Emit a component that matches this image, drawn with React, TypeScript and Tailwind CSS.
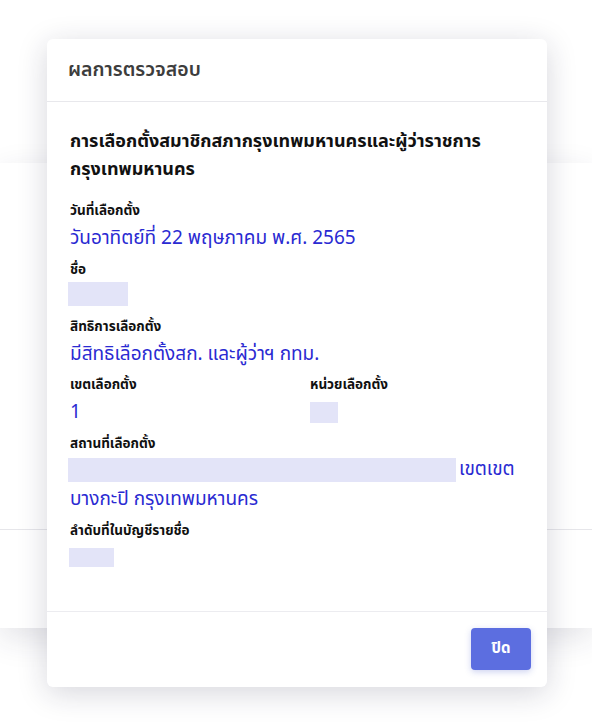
import React from 'react';

const Redacted = ({ className }: { className: string }) => (
  <span className={`inline-block bg-[#e3e4f8] align-middle ${className}`} />
);

const Label = ({ children }: { children: React.ReactNode }) => (
  <div className="pt-[2px] text-[13.5px] font-bold leading-[20px] text-[#111]">{children}</div>
);

const Value = ({ children }: { children: React.ReactNode }) => (
  <div className="pt-[3px] text-[19px] leading-[29px] text-[#2a2ad2]">{children}</div>
);

export default function App() {
  return (
    <div
      className="relative h-[725px] w-[592px] overflow-hidden bg-white"
      style={{ fontFamily: 'Tahoma, "Noto Sans Thai", "Noto Sans", sans-serif' }}
    >
      {/* page behind the dialog */}
      <div className="pt-[163px]">
        <div className="h-[465px] bg-white shadow-[0_10px_30px_rgba(40,40,70,0.13)]">
          <div className="h-[367px] border-b border-[#e6e6ea]" />
        </div>
      </div>

      {/* dialog */}
      <div className="absolute left-[47px] top-[39px] flex h-[648px] w-[500px] flex-col rounded-md bg-white shadow-[0_6px_30px_rgba(30,30,60,0.18)]">
        <div className="flex h-[63px] items-center border-b border-[#e8e8ec] px-[21px]">
          <h1 className="pt-[2px] text-[19.5px] font-semibold text-[#3d3d3d]">ผลการตรวจสอบ</h1>
        </div>

        <div className="flex-1 px-[23px] pt-[26px]">
          <h2 className="mb-[15px] text-[18px] font-bold leading-[28px] text-[#111]">
            การเลือกตั้งสมาชิกสภากรุงเทพมหานครและผู้ว่าราชการกรุงเทพมหานคร
          </h2>

          <Label>วันที่เลือกตั้ง</Label>
          <Value>วันอาทิตย์ที่ 22 พฤษภาคม พ.ศ. 2565</Value>

          <div className="mt-[5px]">
            <Label>ชื่อ</Label>
            <div className="-ml-[2px] mt-[2px] h-[24px] w-[60px] bg-[#e3e4f8]" />
          </div>

          <div className="mt-[9px]">
            <Label>สิทธิการเลือกตั้ง</Label>
            <Value>มีสิทธิเลือกตั้งสก. และผู้ว่าฯ กทม.</Value>
          </div>

          <div className="mt-[4px] grid grid-cols-[240px_1fr]">
            <div>
              <Label>เขตเลือกตั้ง</Label>
              <Value>1</Value>
            </div>
            <div>
              <Label>หน่วยเลือกตั้ง</Label>
              <div className="mt-[7px] h-[21px] w-[28px] bg-[#e3e4f8]" />
            </div>
          </div>

          <div className="mt-[5px]">
            <Label>สถานที่เลือกตั้ง</Label>
            <div className="pt-[1px] text-[19px] leading-[30px] text-[#2a2ad2]">
              <Redacted className="-ml-[2px] mr-[3px] h-[24px] w-[388px]" />
              เขตเขต บางกะปิ กรุงเทพมหานคร
            </div>
          </div>

          <div className="mt-[4px]">
            <Label>ลำดับที่ในบัญชีรายชื่อ</Label>
            <div className="-ml-[1px] mt-[7px] h-[19px] w-[45px] bg-[#e3e4f8]" />
          </div>
        </div>

        <div className="flex h-[76px] items-start justify-end border-t border-[#ececf0] px-[16px] pt-[16px]">
          <button className="h-[42px] w-[60px] rounded-[4px] bg-[#5c6ee0] text-[15px] font-bold text-white shadow-[0_2px_6px_rgba(60,80,200,0.25)]">
            ปิด
          </button>
        </div>
      </div>
    </div>
  );
}
